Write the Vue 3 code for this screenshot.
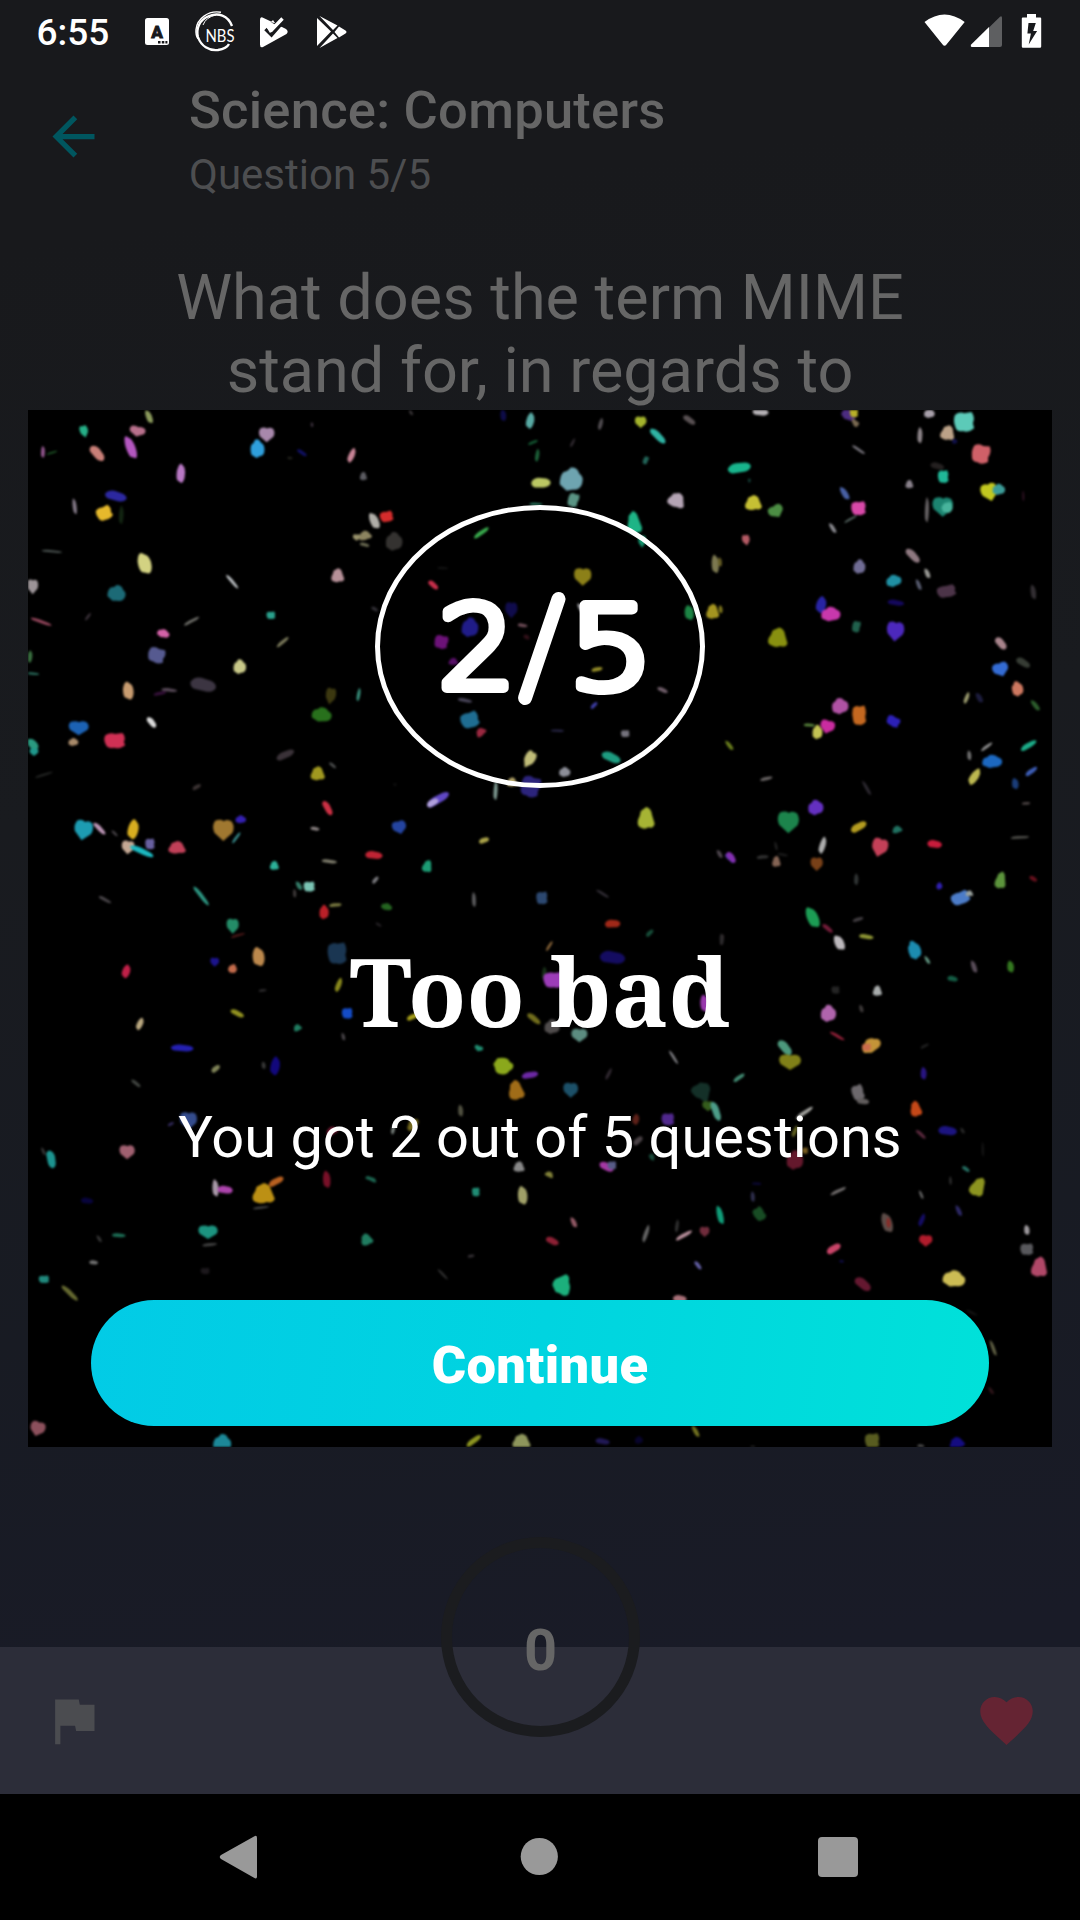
<script setup>
// Outlines on a unit square: whole hearts, hearts seen at an angle, folded bits
const chunky = [
  'M0 .5L-.42 .12Q-.56 -.2 -.38 -.42Q-.14 -.52 .02 -.4Q.2 -.52 .4 -.38Q.56 -.12 .42 .14Z',
  'M-.12 .5L-.46 .3Q-.54 -.02 -.4 -.24Q-.2 -.3 -.12 -.48Q.16 -.56 .3 -.3Q.54 -.2 .5 .1Q.46 .4 .12 .42Z',
  'M-.44 -.34Q-.22 -.52 0 -.42L.34 -.48Q.52 -.2 .4 .06L.46 .3Q.2 .54 -.06 .44Q-.36 .5 -.42 .24Q-.54 -.06 -.44 -.34Z',
  'M.02 -.5Q.3 -.44 .34 -.16L.5 .26Q.42 .5 .14 .42Q-.06 .54 -.28 .44Q-.54 .4 -.46 .08Q-.34 -.1 -.3 -.32Z',
]
const sliver = 'M-.5 -.12Q-.38 -.5 -.1 -.46L.3 -.3Q.54 -.1 .48 .2Q.36 .52 .08 .44L-.34 .34Q-.52 .2 -.5 -.12Z'

// Each confetti bit: centre x, centre y, width, height, rotation, colour
const sheets = [
  {
    transform: 'translate(0 400) scale(.33333)',
    bits: `252 94 26 38 -15 #26b088|129 156 12 38 5 #90558c|156 158 34 6 -20 #1f5a28|292 160 56 32 42 #c97f78|412 94 50 32 12 #b8708c|447 50 18 46 -18 #8b9a5c|392 142 28 78 -18 #b457c0|543 220 26 62 8 #b878c4|348 288 66 32 8 #2c28a0|224 319 12 52 -5 #827886|313 340 50 44 -20 #e6b92c|364 345 14 60 5 #122411|800 104 48 46 0 #a888ac|772 146 42 56 -5 #2f9fdc|936 74 8 16 0 #3a303c|906 158 34 12 30 #101062|870 174 16 8 0 #22221c|1055 166 18 50 28 #c88496|156 454 62 8 4 #4a5250|434 490 40 70 -10 #d3d282|98 560 34 46 0 #9c9498|350 580 54 50 15 #1c6a76|124 665 66 11 18 #94465c|264 650 8 30 40 #393038|575 663 52 10 -30 #6b6b66|697 545 54 11 48 #b9bdc0|813 646 28 24 0 #2aa08c|1013 526 40 42 0 #b69098|1070 412 24 20 0 #99936c|490 700 38 26 18 #d462a8|470 766 54 48 20 #565a90|90 770 14 40 10 #3a7040|98 821 40 8 3 #286858|719 800 38 44 0 #c8c888|848 726 46 12 -42 #79785a|385 872 32 58 0 #c89c70|508 870 48 12 4 #564856|480 880 40 12 -15 #341038|610 854 78 44 5 #3c3542|455 967 38 20 45 #dadada|236 984 62 44 0 #1c62b4|220 1026 30 24 0 #a88a6a|345 1022 66 48 0 #cf3054|98 1032 26 44 -35 #2a9a80|992 888 32 52 10 #3c3810|965 944 60 44 10 #28701c|1076 884 10 44 12 #38907c`,
  },
  {
    transform: 'translate(360 400) scale(.33333)',
    bits: `153 38 8 20 -30 #3a3638|430 46 18 38 0 #0e0c48|511 62 24 52 18 #58aaa4|722 72 12 40 18 #504c50|842 66 36 36 0 #a4b42c|894 108 60 24 40 #2fb4a4|988 60 42 20 30 #585052|519 127 32 10 -25 #125430|532 166 12 42 12 #1c6038|638 128 8 32 30 #302a30|857 181 16 26 25 #226458|10 228 22 26 0 #5c5c62|543 248 58 34 -8 #bcc864|634 238 68 72 10 #6ea4b0|640 300 34 44 20 #5a9484|950 300 54 46 20 #b4a4b4|528 312 40 8 0 #2a7c62|43 362 26 56 -20 #b0aea8|80 350 42 34 -10 #d42c2c|15 406 40 28 -15 #8c8460|14 434 30 12 10 #686850|102 424 50 56 0 #343230|364 398 54 15 -38 #38a84c|822 368 44 70 -8 #1eb486|846 424 24 38 0 #14926c|248 504 34 6 0 #161616|220 555 36 18 35 #c62e4a|44 627 22 12 25 #302e34|668 530 54 54 0 #8c8018|1066 492 22 60 0 #7c7850|988 638 28 48 0 #1c8444|1058 634 40 46 0 #a49420|454 630 38 50 0 #100c4c|330 682 50 60 5 #201c88|244 726 44 42 15 #6c1278|280 784 30 22 0 #581068|488 676 30 12 5 #6a4a54|500 711 20 14 35 #301018|664 626 14 40 -28 #a8a8ac|711 808 34 14 -15 #948c28|908 870 34 14 20 #6e5c68|315 901 44 12 8 #484458|330 960 58 50 -15 #1f6d92|362 996 34 24 -40 #9a2840|592 992 40 8 0 #282646|702 916 26 13 -50 #3c3ca0|796 1001 28 22 0 #74727c|754 1072 60 30 18 #1d9c80|508 1078 34 56 30 #c0bc78|614 1116 34 30 0 #8c8e98|512 1160 62 66 20 #2c247c|456 1146 32 28 0 #b4a468|407 1172 12 62 5 #7c9890|234 1198 76 28 -35 #6048c4|218 1208 38 22 -38 #b0a0dc|858 1254 52 66 0 #a6b434|105 1154 10 8 0 #141414`,
  },
  {
    transform: 'translate(720 400) scale(.33333)',
    bits: `122 36 48 24 0 #b4b0b4|386 44 44 34 30 #4c2c80|402 38 26 30 0 #b8b028|405 68 18 28 -40 #786850|416 149 46 9 32 #75727a|628 40 32 28 0 #a8a0aa|733 66 64 62 0 #5ccab8|683 98 44 46 10 #bca288|600 106 15 52 5 #8c8488|704 124 16 16 0 #10104a|783 162 58 60 15 #cf6068|58 203 70 34 -15 #18b48c|88 242 9 14 0 #143c34|652 198 42 22 8 #242020|670 230 34 40 0 #20b898|568 252 24 26 0 #8a828c|808 276 52 56 -15 #c2c820|836 268 38 34 0 #3c9c98|910 288 6 34 0 #301224|100 308 52 46 0 #c6c034|168 334 48 40 -30 #4c8e44|374 280 18 48 -28 #4860a4|416 325 46 44 0 #d848a8|392 357 44 7 -30 #586864|668 320 64 60 0 #1c8470|682 322 32 36 30 #48b49c|621 330 12 82 3 #646062|338 384 12 38 -30 #86868c|78 420 24 34 -10 #b45a64|418 500 36 44 5 #706c94|579 467 54 26 40 #8e7880|622 520 14 34 -18 #989894|596 554 12 38 -18 #585c70|521 542 46 36 -10 #2090a4|680 574 60 38 -10 #4c3448|528 608 50 18 5 #14085c|304 614 30 54 20 #2824a4|332 642 58 44 0 #c838ac|409 680 26 36 15 #20604c|174 712 60 60 5 #889010|526 694 54 62 5 #4c28bc|940 576 16 48 -5 #322e32|843 730 44 26 42 #a8848c|910 788 46 24 25 #363c34|842 808 50 44 -20 #346cd4|892 866 34 46 -15 #ce7860|740 894 12 40 25 #98986c|778 893 16 36 -25 #1c1c3c|946 916 14 42 -35 #2c5c2c|360 918 50 48 -10 #b052a4|418 946 44 62 0 #c46820|268 975 34 10 0 #58843c|322 980 46 42 15 #ca2ca0|292 996 30 44 0 #c4c454|520 964 44 32 30 #2c20b8|28 1036 12 38 -35 #687c1c|926 1036 54 18 -35 #1cac88|800 1040 42 10 -38 #8c8c8c|0 486 12 30 0 #645c24|2 628 12 26 0 #7c741c`,
  },
  {
    transform: 'translate(0 750) scale(.33333)',
    bits: `102 6 28 24 0 #20988c|132 74 56 7 -18 #252725|856 14 58 24 -30 #3a3238|953 70 44 42 0 #a09820|998 46 26 10 35 #4a4c4c|590 111 28 14 -35 #3a3232|983 174 48 22 55 #cb3044|945 236 28 12 5 #888080|250 240 58 62 10 #1d9cb2|299 236 48 16 42 #ba94b4|344 250 24 9 40 #444044|400 238 32 64 18 #d8ae20|384 292 40 42 5 #c4a894|426 304 76 20 22 #1cb8c0|450 282 30 34 0 #6860a0|531 292 54 38 0 #c04058|670 240 64 66 0 #a07830|722 208 32 24 0 #3420b0|709 263 40 9 -55 #388c8c|823 346 28 28 0 #2cb098|988 334 46 12 4 #7e7c6c|897 407 14 32 -25 #347c68|928 410 36 32 0 #7ac4b4|884 430 10 28 0 #3c3838|1006 465 38 12 -8 #787840|972 486 28 44 0 #ba2028|315 449 42 11 26 #484448|604 438 72 14 50 #2c9480|698 528 38 46 0 #248c68|714 556 44 8 -18 #4c1818|1012 610 60 68 0 #1a3652|776 620 36 62 0 #bc884c|644 636 28 28 0 #1c148c|698 656 26 28 20 #c46c4c|379 664 24 44 25 #c02048|788 721 24 8 -10 #302e30|1016 705 16 48 25 #88881c|712 790 44 18 22 #909020|1042 790 34 34 0 #144cc8|892 833 26 20 -25 #207c60|420 822 18 42 30 #baa880|1030 860 10 26 -10 #484448|547 894 68 23 0 #2420b0|826 948 28 60 15 #12087c|791 946 12 24 0 #383838|647 956 30 18 -45 #808458|408 1000 34 12 35 #404440`,
  },
  {
    transform: 'translate(340 800) scale(.33333)',
    bits: `178 82 44 42 -15 #2444a0|102 165 52 26 0 #c02434|432 121 32 18 -25 #a8a048|262 198 30 38 15 #1c9c74|106 240 26 13 -55 #78787c|402 299 12 48 0 #5a5a5c|606 294 36 40 0 #2c4870|788 281 44 9 30 #302c34|818 371 46 27 -10 #a02818|140 320 34 22 15 #246420|116 374 20 9 28 #242024|628 438 34 9 -60 #886438|929 399 28 15 -50 #164c38|1146 419 10 36 15 #44383c|1139 162 12 30 -25 #4c444c|1172 172 36 22 45 #6438b4|818 472 76 42 0 #140c60|613 520 14 42 8 #183018|644 540 70 50 0 #9c3cb8|1094 610 26 56 0 #9838ac|718 706 50 42 0 #5c8c80|636 680 46 44 0 #504c4c|582 656 48 20 35 #706c1c|218 650 38 18 -30 #a49c18|416 745 28 18 20 #208c70|490 798 50 60 90 #8ba81c|570 825 50 22 -15 #6c28a4|528 870 48 60 -10 #a06c18|692 870 46 46 0 #1c5068|806 822 10 42 30 #302830|1001 772 48 9 56 #7c7c80|1086 872 62 54 35 #143028|1104 918 36 32 0 #345c1c|1128 934 60 25 65 #4c9c88|984 958 40 38 0 #50288c|888 958 20 36 20 #5c2018|362 932 15 38 0 #505040|218 974 42 26 -45 #74681c|894 1022 34 20 -50 #484044|537 1100 34 32 0 #888888|936 1072 16 24 -25 #184838|800 1100 46 26 20 #a438a4|816 1096 28 26 0 #585c88|628 1123 28 18 25 #808038|92 1136 32 12 10 #1c6850`,
  },
  {
    transform: 'translate(720 750) scale(.33333)',
    bits: `748 16 12 32 0 #707070|816 34 60 40 0 #1c68c0|764 80 24 60 38 #bcb850|934 64 42 16 -40 #3c5cb4|886 101 20 36 0 #1a3c78|918 160 26 10 -8 #484040|139 86 38 11 -15 #686464|440 114 10 54 -28 #2c2830|205 216 66 68 0 #1c844c|287 172 46 46 -5 #6430c0|416 230 52 26 -35 #b49c20|531 238 32 22 -15 #207060|479 292 50 58 15 #c44058|644 282 44 26 0 #c81c3c|900 262 56 9 -5 #4c4c48|308 286 18 56 20 #acacac|168 288 8 30 -10 #202020|128 321 36 12 -8 #303030|188 314 32 8 8 #1c1c1c|169 334 26 34 0 #846454|290 342 38 42 0 #784018|34 322 38 20 48 #8430b0|409 388 13 38 5 #303434|842 390 34 52 10 #5c943c|940 386 26 15 25 #64101c|658 408 18 22 0 #3020b0|722 444 60 40 -20 #4c7cc8|748 430 24 18 0 #98a09c|278 502 34 72 -20 #1c9c54|323 535 38 15 35 #701c38|358 578 28 52 -20 #bcb8bc|414 508 34 12 -20 #403c40|439 560 44 15 5 #8c9434|583 600 38 58 -20 #1c8cb0|622 630 10 30 -28 #609480|698 686 32 18 5 #145c44|762 650 15 42 -15 #584c58|872 650 20 38 0 #347820|347 720 26 24 0 #242424|472 722 28 32 0 #a8acac|424 776 12 26 -10 #3c3838|325 790 46 52 0 #b064ac|352 858 50 10 28 #902038|195 893 54 30 42 #4c987c|210 936 68 48 0 #808018|453 886 60 42 -25 #c49438|440 892 28 24 0 #cc6c4c|611 970 18 40 5 #281480|614 888 28 9 -30 #202020|57 983 40 14 -38 #408870|414 1028 38 50 -15 #6c686c|5 568 12 36 0 #2c2a2c`,
  },
  {
    transform: 'translate(0 1100) scale(.34436 .33333)',
    bits: `547 62 52 54 0 #344c8c|496 72 20 10 -35 #302858|149 178 54 28 72 #1c9490|126 154 8 28 -20 #383838|369 156 46 44 0 #a06070|626 264 18 56 0 #a898a8|654 269 44 26 0 #ac44ac|765 280 66 62 0 #bc9014|802 244 48 22 -35 #b86020|758 323 48 7 -8 #484848|949 238 22 56 0 #781028|963 93 38 24 -30 #741c34|1078 238 34 11 25 #1c6450|1142 88 10 34 15 #78807c|1382 276 24 28 0 #208c74|1518 286 28 60 0 #a0a068|253 302 36 20 0 #08043c|345 406 40 13 0 #1c6c54|288 416 9 26 -28 #343434|272 487 26 14 0 #707070|604 396 58 42 0 #1c9480|609 434 44 10 -8 #404040|596 513 28 20 0 #1c181c|1064 418 36 36 -20 #207c60|1368 468 20 10 -15 #343034|1286 523 42 8 45 #303030|128 538 32 24 0 #20887c|203 579 64 16 42 #646830|109 986 46 46 15 #8c505c|645 1030 52 56 5 #1c8898|1376 1022 52 18 -42 #8c9420|1514 1024 54 46 0 #8e965c`,
  },
  {
    transform: 'translate(540 1100) scale(.34436 .33333)',
    bits: `768 38 60 13 -38 #a0a09c|740 94 12 40 25 #606020|938 4 36 20 0 #605c5c|1091 26 34 48 -10 #c44818|1184 92 54 30 0 #1c1480|1106 103 38 12 40 #58283c|1227 92 9 22 -25 #282828|1286 148 7 48 0 #141414|1237 207 26 13 30 #246c60|740 180 48 58 0 #64182c|770 152 18 20 0 #785c20|1272 260 44 60 25 #8c9420|1192 242 7 28 0 #303030|1107 284 8 30 -20 #606060|866 273 50 11 -28 #706c6c|629 251 28 8 0 #0c0838|618 290 12 34 0 #2e2e4c|523 345 18 62 -10 #109c78|637 342 34 44 -30 #184c24|98 367 14 36 -20 #905864|36 423 40 22 20 #8c2034|308 401 12 60 20 #646464|398 378 10 42 10 #303030|418 406 54 13 -32 #b48c98|478 395 30 32 0 #702c3c|1008 368 30 66 -12 #5c4c48|1012 368 12 34 0 #882c28|1109 360 14 44 25 #140c64|1216 332 13 38 -20 #2c2864|1414 390 16 32 0 #9c989c|1414 448 40 36 0 #58585c|1450 500 48 62 5 #b04868|1120 422 40 36 0 #b01c2c|853 446 46 24 -40 #c84468|459 496 30 13 48 #605ca0|62 556 66 52 -90 #1cb07c|938 552 54 32 32 #641830|1202 536 66 50 10 #ccbc54|406 596 40 24 0 #a87078|876 484 14 8 0 #100c48|1316 744 10 54 -18 #606044|1310 872 10 28 -30 #2c1418|1254 638 34 7 25 #181818|452 994 13 42 -25 #707020|182 1024 42 20 5 #201854|287 1020 24 24 0 #08042c|965 1022 44 46 0 #585c20|1210 1028 46 34 -15 #140c80|1106 1038 20 12 0 #4c4c4c|618 1040 14 6 0 #303030`,
  },
].map((sheet) => ({
  transform: sheet.transform,
  bits: sheet.bits.split('|').map((row, n) => {
    const parts = row.split(' ')
    const [x, y, w, h, r] = parts.slice(0, 5).map(Number)
    const wide = Math.min(w, h) / Math.max(w, h) > 0.6
    return {
      fill: parts[5],
      d: wide ? chunky[n % chunky.length] : sliver,
      at: `translate(${x} ${y}) rotate(${r}) scale(${w} ${h})`,
    }
  }),
}))
</script>

<template>
  <div class="screen">
    <div class="status">
      <span class="clock">6:55</span>
      <svg class="tray" width="220" height="60" viewBox="140 0 220 60" fill="#fff">
        <rect x="145" y="18" width="24" height="27" rx="2.5" />
        <text x="157" y="38" text-anchor="middle" font-size="17" font-weight="900" fill="#18191c" stroke="#18191c" stroke-width=".8">A</text>
        <path d="M158 41h2.5v2.5H158zM161.800 41h2.500v2.500h-2.500zM165.400 41h2v2.500h-2z" fill="#18191c" />
        <g fill="none" stroke="#fff">
          <path d="M232 26C228 15 218 12.500 209 16C199 20 196 29 198 37C201 46 209 51 218 50C224 49 228 46 229 44" stroke-width="2.300" />
          <path d="M221 12.300C208 10 197 19 196 29.500Q195.500 35 198 39" stroke-width="1.400" />
          <path d="M203 25Q206 17 216 15" stroke-width="1" />
        </g>
        <text x="205.500" y="41.500" font-size="17.500" textLength="29" lengthAdjust="spacingAndGlyphs" class="nbs">NBS</text>
        <path d="M262.500 17.500L271 21.500L286 29Q289 31.500 286.500 34L263 47Q260 48 260 44.500V20Q260 16.500 262.500 17.500Z" />
        <path d="M265.500 29L271.500 35L285 19.500" fill="none" stroke="#18191c" stroke-width="3.500" />
        <path d="M273 20L277 26L270 33L266 26.500L271.500 21.500Z" fill="#fff" />
        <path d="M270.500 22L276 25L284 15L288 24L282.500 27L276 23.500Z" fill="#18191c" />
        <path d="M268.500 25.500L272 29.500L282.500 18.500" fill="none" stroke="#fff" stroke-width="3.400" />
        <path d="M317 18L331 31.500L317 46ZM319.500 16L337.500 25.500L333 30ZM333 33.500L337.500 38L319.500 48ZM339 26.500L345.500 30.500Q347.500 32 345.500 33.500L339 37.500L334.500 32Z" />
      </svg>
      <svg class="signals" width="120" height="60" viewBox="920 0 120 60" fill="#fff">
        <path d="M924.500 22Q944.500 7 964.700 22L946.500 44.500Q944.500 47 942.600 44.500Z" />
        <path d="M1000 16.800Q1002 15.500 1002 18V45Q1002 47 1000 47H989V27.500Z" fill="#5e5f61" />
        <path d="M989 27V47H972Q970 46.500 971.200 44.500Z" />
        <path d="M1027 14h9v3.500h4.200a1 1 0 0 1 1 1V46.500a1.200 1.200 0 0 1-1.200 1.200h-17a1.200 1.200 0 0 1-1.200-1.200V18.500a1 1 0 0 1 1-1H1027Z" />
        <path d="M1028.500 23h7.300l-2.600 8h3.900l-8.400 13.500 2.200-11h-3.500Z" fill="#18191c" />
      </svg>
    </div>

    <header class="bar">
      <svg class="back" width="63" height="63" viewBox="0 0 24 24" fill="#00565f">
        <path d="M20 11H7.830l5.590-5.590L12 4l-8 8 8 8 1.410-1.410L7.830 13H20v-2z" />
      </svg>
      <div>
        <div class="title">Science: Computers</div>
        <div class="sub">Question 5/5</div>
      </div>
    </header>

    <div class="question">What does the term MIME<br />stand for, in regards to</div>

    <footer class="actions">
      <svg width="63" height="63" viewBox="0 0 24 24" fill="#4b4c50">
        <path d="M14.400 6L14 4H5v17h2v-7h5.600l.4 2h7V6z" />
      </svg>
      <svg width="63" height="63" viewBox="0 0 24 24" fill="#652433">
        <path d="M12 21.350l-1.450-1.320C5.400 15.360 2 12.280 2 8.500 2 5.420 4.420 3 7.500 3c1.740 0 3.410.81 4.500 2.090C13.090 3.810 14.760 3 16.500 3 19.580 3 22 5.420 22 8.500c0 3.780-3.400 6.860-8.550 11.540L12 21.350z" />
      </svg>
      <div class="timer"><span>0</span></div>
    </footer>

    <nav class="nav">
      <svg width="1080" height="126" viewBox="0 1794 1080 126" fill="#999">
        <path d="M254 1836.500Q257 1834.500 257 1838V1876.500Q257 1879.500 254 1877.800L221 1859Q218.500 1857 221 1855Z" />
        <circle cx="539.300" cy="1856.500" r="18.600" />
        <rect x="818" y="1837" width="40" height="40" rx="4" />
      </svg>
    </nav>

    <section class="modal">
      <svg class="confetti" width="1024" height="1037" viewBox="28 410 1024 1037">
        <g v-for="(sheet, i) in sheets" :key="i" :transform="sheet.transform">
          <path v-for="(bit, j) in sheet.bits" :key="j" :d="bit.d" :fill="bit.fill" :transform="bit.at" />
        </g>
      </svg>
      <div class="score">
        <svg width="320" height="273" viewBox="380 510 320 273">
          <text class="digits" x="438.500" y="688" textLength="77" lengthAdjust="spacingAndGlyphs">2</text>
          <path d="M558.500 599L525 698" stroke="#fff" stroke-width="14" stroke-linecap="round" />
          <text class="digits" x="568.500" y="688" textLength="85" lengthAdjust="spacingAndGlyphs">5</text>
        </svg>
      </div>
      <h1 class="verdict">Too bad</h1>
      <p class="summary">You got 2 out of 5 questions</p>
      <button class="go">Continue</button>
    </section>
  </div>
</template>

<style>
body {
  background: #000;
}
</style>

<style scoped>
.screen {
  position: relative;
  display: flex;
  flex-direction: column;
  width: 1080px;
  height: 1920px;
  overflow: hidden;
  background: linear-gradient(172deg, #18191c 12%, #191b1f 40%, #181b23 65%, #191b27 85%);
  font-family: Roboto, sans-serif;
  color: #666;
}
.status {
  display: flex;
  height: 60px;
  color: #fff;
}
.clock {
  width: 103.500px;
  padding-left: 36.500px;
  font-size: 37px;
  font-weight: 500;
  line-height: 65px;
}
.signals {
  margin-left: auto;
  margin-right: 40px;
}
.signals,
.tray {
  overflow: visible;
}
.nbs {
  font-family: Lato, sans-serif;
}
.bar {
  display: flex;
  height: 201px;
}
.back {
  margin: 45px 84px 0 42px;
}
.title {
  margin-top: 20px;
  font-size: 52.500px;
  font-weight: 500;
  line-height: 61px;
  letter-spacing: 0.250px;
}
.sub {
  margin-top: 9px;
  font-size: 42px;
  line-height: 50px;
  color: #4d4e50;
}
.question {
  font-size: 63px;
  line-height: 73px;
  text-align: center;
}
.actions {
  position: relative;
  display: flex;
  justify-content: space-between;
  box-sizing: border-box;
  height: 147px;
  margin-top: auto;
  padding: 42px 42px 0;
  background: #2c2d39;
}
.timer {
  position: absolute;
  left: 441px;
  top: -110px;
  box-sizing: border-box;
  width: 199px;
  height: 200px;
  border: 11px solid #1b1c1f;
  border-radius: 50%;
  font-size: 57.750px;
  font-weight: 700;
  text-align: center;
  line-height: 204px;
}
.nav {
  height: 126px;
  background: #000;
}
.nav svg {
  display: block;
}
.modal {
  position: absolute;
  left: 28px;
  top: 410px;
  display: flex;
  flex-direction: column;
  align-items: center;
  width: 1024px;
  height: 1037px;
  overflow: hidden;
  background: #000;
  color: #fff;
}
.confetti {
  position: absolute;
  left: 0;
  top: 0;
  filter: blur(0.900px);
}
.score {
  position: relative;
  margin-top: 95px;
  width: 320px;
  height: 273px;
  border: 5px solid #fff;
  border-radius: 50%;
}
.score svg {
  display: block;
}
.digits {
  font-family: 'DejaVu Sans Light', 'DejaVu Sans', sans-serif;
  font-size: 114px;
  font-weight: 200;
  fill: #fff;
  stroke: #fff;
  stroke-width: 10px;
  stroke-linejoin: round;
}
.verdict {
  position: relative;
  margin: 137px 0 0;
  font-family: 'Noto Serif', 'Droid Serif', 'DejaVu Serif Condensed', 'DejaVu Serif', serif;
  font-size: 95.200px;
  font-weight: 700;
  line-height: 130px;
  white-space: nowrap;
}
.summary {
  position: relative;
  margin: 47px 0 0;
  font-size: 57.750px;
  line-height: 70px;
  letter-spacing: 0.050px;
}
.go {
  position: relative;
  width: 898px;
  height: 126px;
  margin-top: 128px;
  padding: 3px 0 0;
  border: 0;
  border-radius: 63px;
  background: linear-gradient(98deg, #02cbe6, #00d4e0 50%, #00e1d9);
  color: #fff;
  font: 900 52.500px Roboto, sans-serif;
  letter-spacing: 0.350px;
}
</style>
